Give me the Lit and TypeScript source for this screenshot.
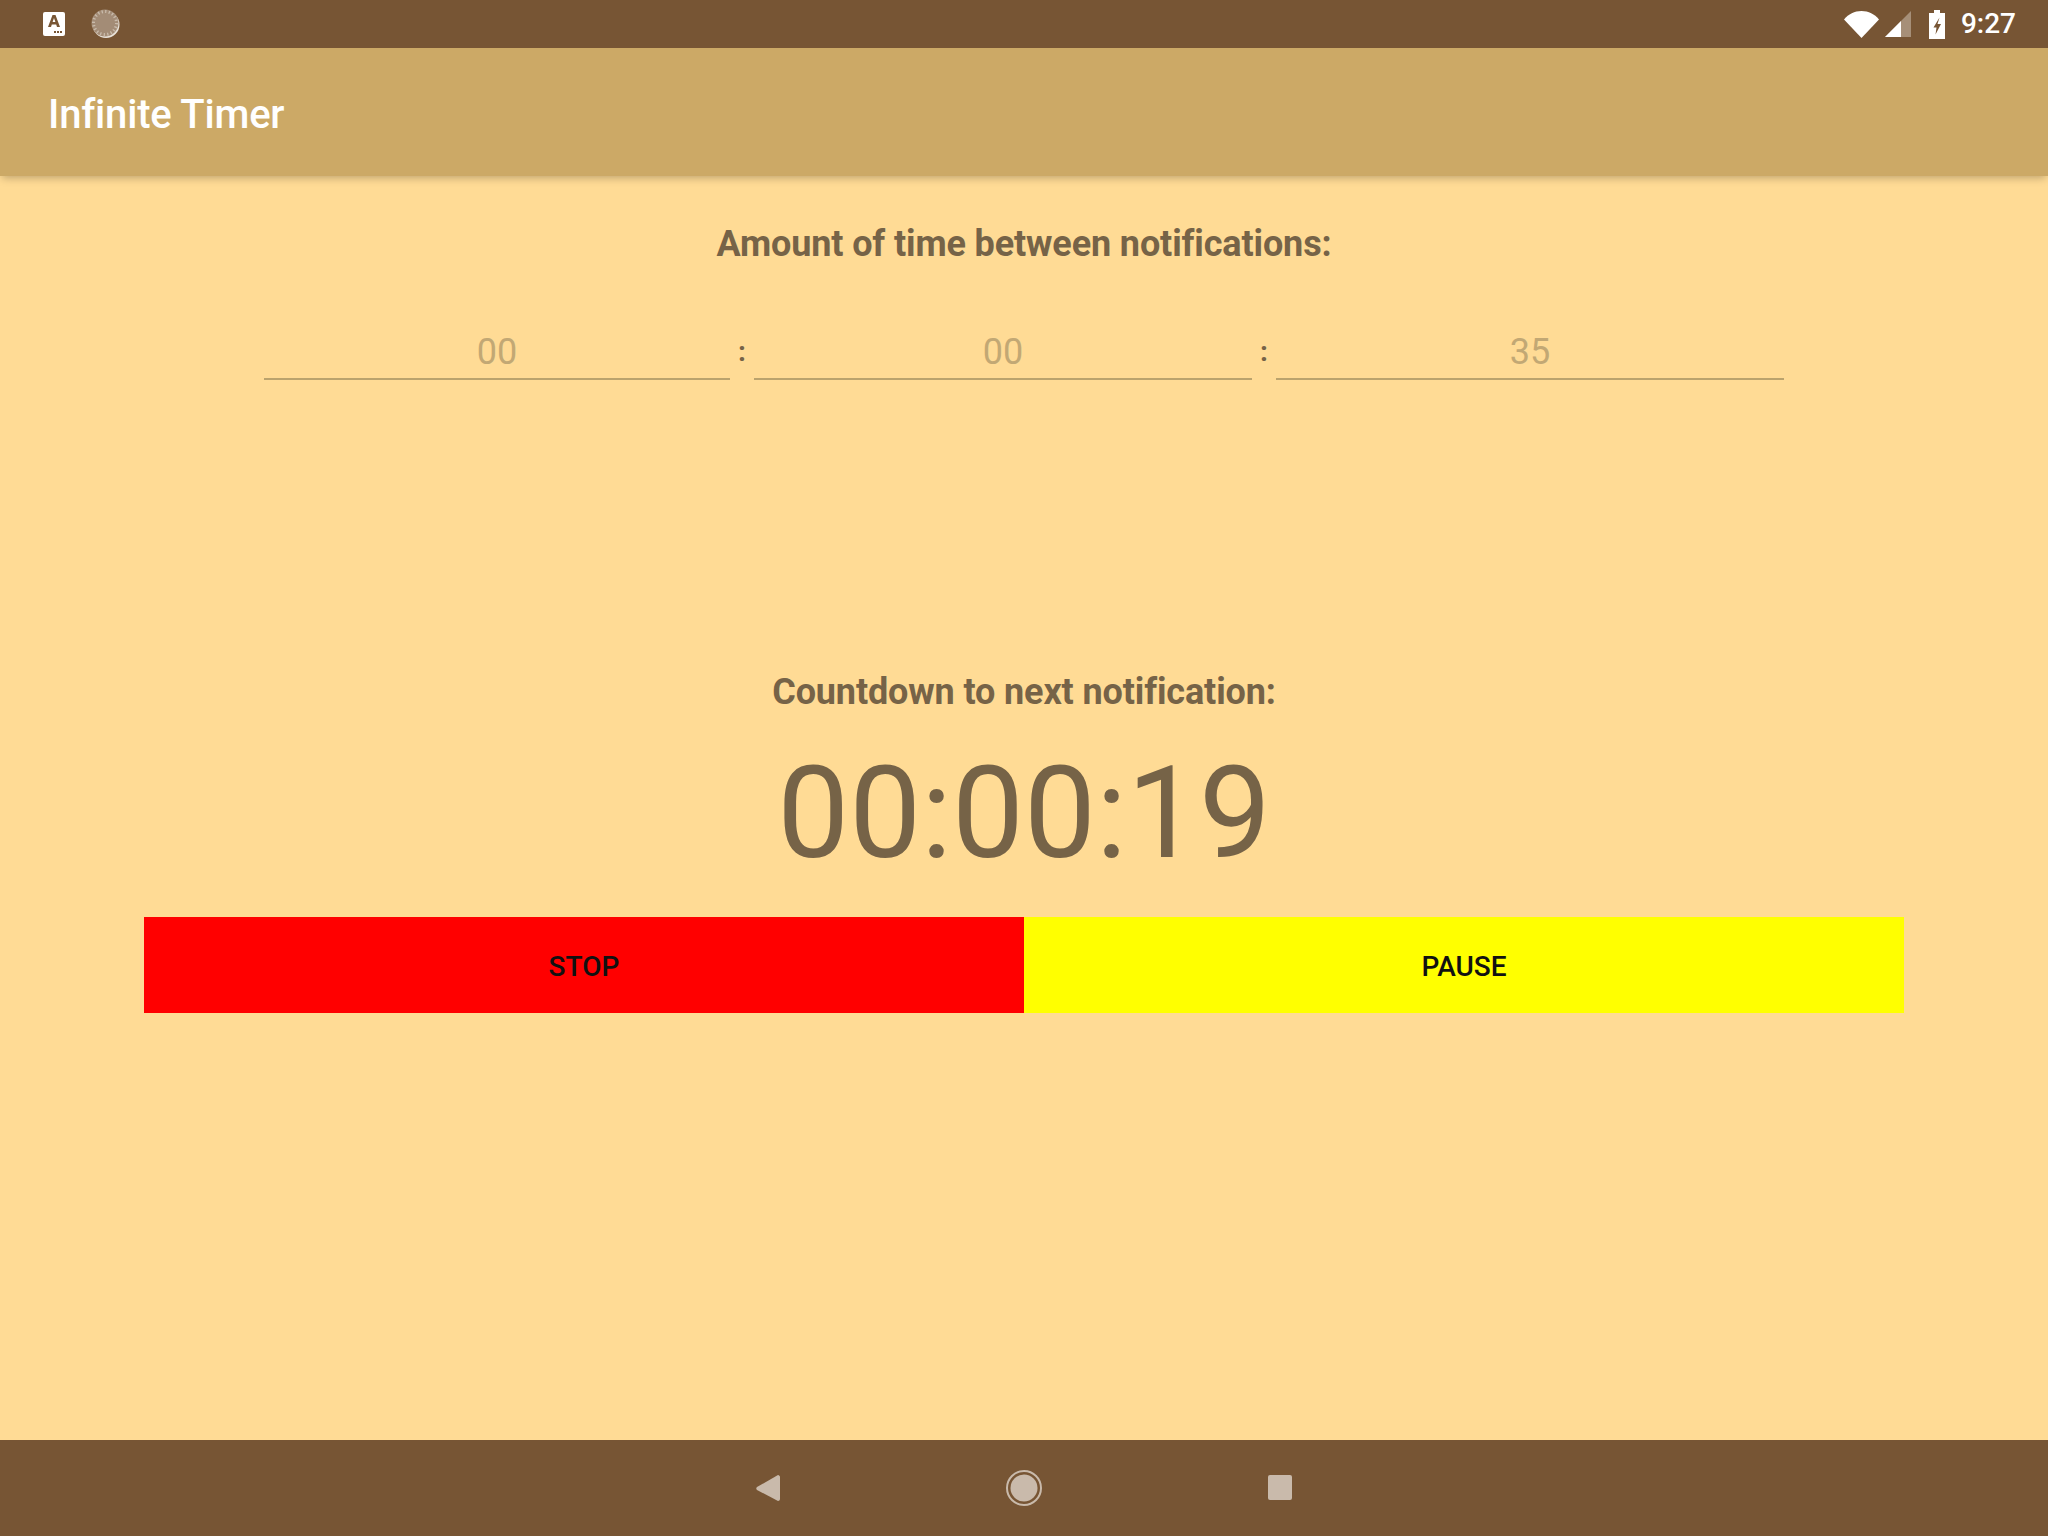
import { LitElement, html, css } from "lit";
import { customElement } from "lit/decorators.js";

@customElement("app-root")
export class AppRoot extends LitElement {
  static styles = css`
    :host { display: block; font-family: Roboto, "Liberation Sans", sans-serif; }
    .page { height: 1536px; display: flex; flex-direction: column; background: #ffdb95; overflow: hidden; }
    .status { height: 48px; flex: none; background: #775534; display: flex; align-items: center; padding: 0 32px 0 43px; position: relative; z-index: 2; }
    .status svg { display: block; flex: none; }
    .notif { margin-left: 26px; }
    .spacer { flex: 1; }
    .signal { margin-left: 6px; }
    .batt { margin-left: 18px; }
    .time { margin-left: 16px; color: #fff; font-size: 28px; font-weight: 500; line-height: 48px; }
    .bar { height: 128px; box-sizing: border-box; flex: none; background: #cca966; display: flex; align-items: center; padding: 5px 0 0 48px; color: #fff; font-size: 40px; letter-spacing: -0.2px; font-weight: 500; box-shadow: 0 4px 8px -2px rgba(0,0,0,.25); position: relative; z-index: 1; }
    main { flex: 1; display: flex; flex-direction: column; align-items: stretch; }
    .head { text-align: center; color: #766347; font-size: 36px; letter-spacing: -0.13px; font-weight: 700; line-height: 48px; }
    .h1 { margin-top: 44px; }
    .fields { display: grid; grid-template-columns: 466px 24px 498px 24px 508px; margin: 43px 0 0 264px; width: 1520px; }
    .field { height: 69px; padding-top: 9px; box-sizing: border-box; border-bottom: 2px solid #bba36d; text-align: center; color: #c2a874; font-size: 36px; line-height: 64px; }
    .sep { padding-top: 9px; text-align: center; color: #766347; font-size: 28px; font-weight: 700; line-height: 64px; }
    .h2 { margin-top: 284px; }
    .count { text-align: center; color: #766347; font-size: 128px; line-height: 150px; margin-top: 22px; }
    .btns { display: flex; margin: 29px 144px 0; height: 96px; }
    .btn { flex: 1; display: flex; align-items: center; justify-content: center; padding-top: 2px; color: #111; font-size: 28px; font-weight: 500; }
    .stop { background: #f00; }
    .pause { background: #ff0; }
    nav { height: 96px; flex: none; background: #775534; display: flex; align-items: center; justify-content: center; }
    nav svg { display: block; }
  `;

  render() {
    return html`<div class="page">
      <div class="status">
        <svg width="22" height="24" viewBox="0 0 22 24"><rect width="22" height="24" rx="2" fill="#fff"/><path d="M5 15 9.500 3h3L17 15h-3l-.8-2.500H8.800L8 15zM9.600 10h2.800L11 6z" fill="#775534"/><rect x="11" y="19" width="2" height="2" fill="#775534"/><rect x="14" y="19" width="2" height="2" fill="#775534"/><rect x="17" y="19" width="2" height="2" fill="#775534"/></svg>
        <svg class="notif" width="30" height="30" viewBox="0 0 30 30"><circle cx="15" cy="15.500" r="13.500" fill="#e9e3da"/><circle cx="14" cy="14" r="13.500" fill="#a38c76"/><circle cx="14" cy="14" r="11.500" fill="none" stroke="#c9bbab" stroke-width="3" stroke-dasharray="1.300 2.300"/></svg>
        <div class="spacer"></div>
        <svg width="35" height="27" viewBox="0 0 35 27"><path d="M0 8.500C4.500 3 10.500 0 17.500 0S30.500 3 35 8.500L17.500 27z" fill="#fff"/></svg>
        <svg class="signal" width="26" height="26" viewBox="0 0 26 26"><path d="M26 0V26H0z" fill="#a68f78"/><path d="M16 10V26H0z" fill="#fff"/></svg>
        <svg class="batt" width="16" height="29" viewBox="0 0 16 29"><path d="M5 0h6v3h5v26H0V3h5z" fill="#fff"/><path d="M10.500 7.500 4.500 17.500h3l-1 7L12 14H8.500z" fill="#775534"/></svg>
        <div class="time">9:27</div>
      </div>
      <div class="bar">Infinite Timer</div>
      <main>
        <div class="head h1">Amount of time between notifications:</div>
        <div class="fields">
          <div class="field">00</div><div class="sep">:</div>
          <div class="field">00</div><div class="sep">:</div>
          <div class="field">35</div>
        </div>
        <div class="head h2">Countdown to next notification:</div>
        <div class="count">00:00:19</div>
        <div class="btns">
          <div class="btn stop">STOP</div>
          <div class="btn pause">PAUSE</div>
        </div>
      </main>
      <nav>
        <svg width="536" height="96" viewBox="0 0 536 96">
          <path d="M1 47 C0 48 0 49 1 50 L22 61 C23 61 24 60 24 59 V37 C24 36 23 35 22 35z" fill="#c9baab"/>
          <circle cx="268" cy="48" r="17" fill="none" stroke="#c9baab" stroke-width="2"/>
          <circle cx="268" cy="48" r="13.500" fill="#c9baab"/>
          <rect x="512" y="35" width="24" height="25" rx="2" fill="#c9baab"/>
        </svg>
      </nav>
    </div>`;
  }
}
